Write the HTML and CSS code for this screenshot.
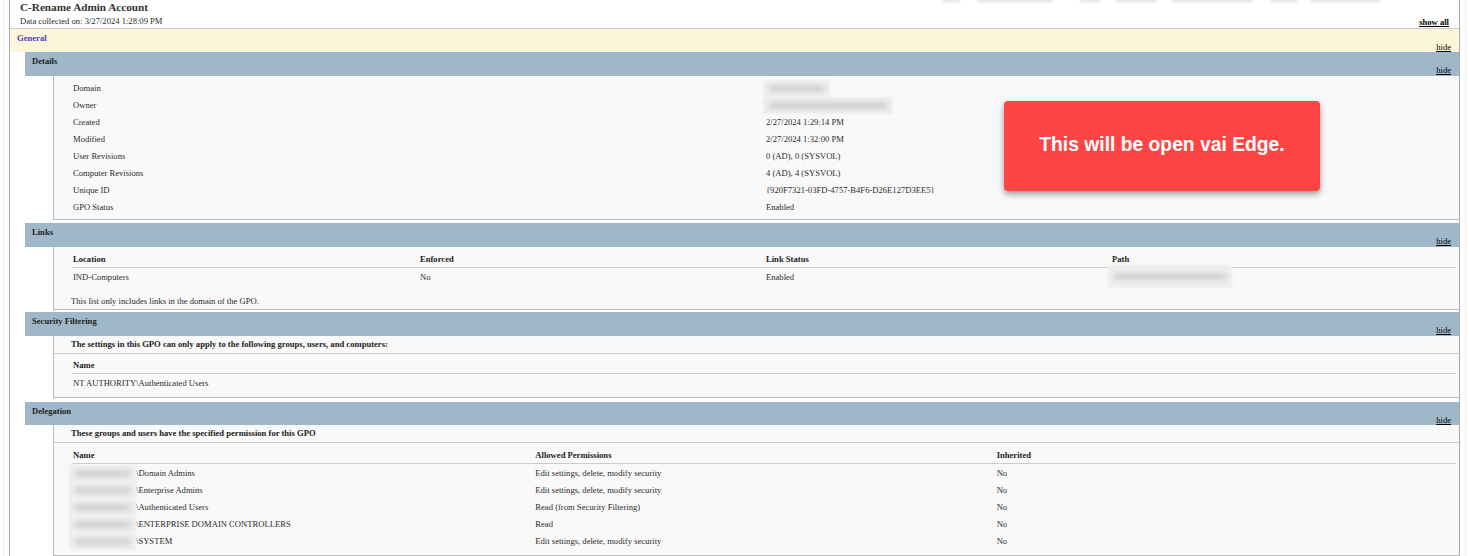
FILE: index.html
```html
<!DOCTYPE html>
<html lang="en">
<head>
    <meta charset="UTF-8">
    <meta name="viewport" content="width=device-width, initial-scale=1.0">
    <title>C-Rename Admin Account</title>
    <link rel="stylesheet" href="styles.css">
</head>
<body>
    <div class="page">
    <div class="report">
        <div class="top-smudge"></div>
        <div class="report-head">
            <div>
                <h1 class="report-title">C-Rename Admin Account</h1>
                <div class="report-date">Data collected on: 3/27/2024 1:28:09 PM</div>
            </div>
            <a class="toggle toggle-bold" href="#">show all</a>
        </div>

        <div class="notice">This will be open vai Edge.</div>

        <div class="general-bar">
            <span class="general-title">General</span>
            <a class="toggle" href="#">hide</a>
        </div>

        <div class="section">
            <div class="section-bar">
                <span class="section-title">Details</span>
                <a class="toggle" href="#">hide</a>
            </div>
            <div class="section-body details-body">
                <table class="info-table">
                    <tr><td>Domain</td><td><span class="smudge smudge-domain"></span></td></tr>
                    <tr><td>Owner</td><td><span class="smudge smudge-owner"></span></td></tr>
                    <tr><td>Created</td><td>2/27/2024 1:29:14 PM</td></tr>
                    <tr><td>Modified</td><td>2/27/2024 1:32:00 PM</td></tr>
                    <tr><td>User Revisions</td><td>0 (AD), 0 (SYSVOL)</td></tr>
                    <tr><td>Computer Revisions</td><td>4 (AD), 4 (SYSVOL)</td></tr>
                    <tr><td>Unique ID</td><td>{920F7321-03FD-4757-B4F6-D26E127D3EE5}</td></tr>
                    <tr><td>GPO Status</td><td>Enabled</td></tr>
                </table>
            </div>
        </div>

        <div class="section section-links">
            <div class="section-bar">
                <span class="section-title">Links</span>
                <a class="toggle" href="#">hide</a>
            </div>
            <div class="section-body links-body">
                <table class="info-table">
                    <thead>
                        <tr><th>Location</th><th>Enforced</th><th>Link Status</th><th>Path</th></tr>
                    </thead>
                    <tr><td>IND-Computers</td><td>No</td><td>Enabled</td><td class="path-cell"><span class="smudge smudge-path"></span></td></tr>
                </table>
                <p class="note">This list only includes links in the domain of the GPO.</p>
            </div>
        </div>

        <div class="section section-filter">
            <div class="section-bar">
                <span class="section-title">Security Filtering</span>
                <a class="toggle" href="#">hide</a>
            </div>
            <div class="section-body filter-body">
                <div class="subhead">The settings in this GPO can only apply to the following groups, users, and computers:</div>
                <table class="info-table">
                    <thead>
                        <tr><th>Name</th></tr>
                    </thead>
                    <tr><td>NT AUTHORITY\Authenticated Users</td></tr>
                </table>
            </div>
        </div>

        <div class="section section-delegation">
            <div class="section-bar">
                <span class="section-title">Delegation</span>
                <a class="toggle" href="#">hide</a>
            </div>
            <div class="section-body delegation-body">
                <div class="subhead">These groups and users have the specified permission for this GPO</div>
                <table class="info-table">
                    <thead>
                        <tr><th>Name</th><th>Allowed Permissions</th><th>Inherited</th></tr>
                    </thead>
                    <tr><td><span class="smudge smudge-name"></span>\Domain Admins</td><td>Edit settings, delete, modify security</td><td>No</td></tr>
                    <tr><td><span class="smudge smudge-name"></span>\Enterprise Admins</td><td>Edit settings, delete, modify security</td><td>No</td></tr>
                    <tr><td><span class="smudge smudge-name"></span>\Authenticated Users</td><td>Read (from Security Filtering)</td><td>No</td></tr>
                    <tr><td><span class="smudge smudge-name"></span>\ENTERPRISE DOMAIN CONTROLLERS</td><td>Read</td><td>No</td></tr>
                    <tr><td><span class="smudge smudge-name"></span>\SYSTEM</td><td>Edit settings, delete, modify security</td><td>No</td></tr>
                </table>
            </div>
        </div>
    </div>
    </div>
</body>
</html>
```

FILE: styles.css
```css
html, body {
    margin: 0;
    padding: 0;
    height: 556px;
    overflow: hidden;
    background-color: #fff;
}

body {
    font-family: "Liberation Serif", "Times New Roman", serif;
    font-size: 8.6px;
    color: #2a2a2a;
}

.page {
    height: 556px;
    margin: 0 3px;
    padding: 0 5px;
    border-left: 1px solid #eee;
    border-right: 1px solid #eee;
}

.report {
    position: relative;
    height: 556px;
    border-right: 1px solid #aaa;
    border-left: 1px solid #aaa;
}

.report-head {
    display: flex;
    justify-content: space-between;
    align-items: flex-end;
    height: 28px;
    padding: 0 10px 0 10px;
    border-bottom: 1px solid #ccc;
}

.report-title {
    margin: 0;
    font-size: 11.2px;
    line-height: 14px;
    font-weight: bold;
    color: #333;
}

.report-date {
    line-height: 14px;
}

.top-smudge {
    position: absolute;
    left: 923px;
    top: -1px;
    width: 450px;
    height: 3px;
    background: linear-gradient(90deg,
        #fff 0 0, #fff 0 10px, #ddd 10px 27px, #fff 27px 44px,
        #ddd 44px 120px, #fff 120px 147px, #ddd 147px 167px,
        #fff 167px 184px, #ddd 184px 224px, #fff 224px 240px,
        #ddd 240px 320px, #fff 320px 337px, #ddd 337px 364px,
        #fff 364px 377px, #ddd 377px 447px, #fff 447px);
    filter: blur(1.5px);
}

.toggle {
    color: #000;
    font-size: 8.6px;
    line-height: 10px;
    text-decoration: underline;
}

.toggle-bold {
    font-weight: bold;
    margin-bottom: 1px;
}

.general-bar {
    display: flex;
    justify-content: space-between;
    align-items: flex-end;
    height: 23px;
    box-sizing: border-box;
    padding: 0 8px 0 7px;
    background-color: #fef6d8;
}

.general-title {
    align-self: flex-start;
    margin-top: 4px;
    font-weight: bold;
    line-height: 10px;
    color: #4a3fc0;
}

.section {
    margin-left: 15px;
    margin-bottom: 3px;
}

.section-links {
    margin-bottom: 2px;
}

.section-filter {
    margin-bottom: 4px;
}

.section-bar {
    display: flex;
    justify-content: space-between;
    align-items: flex-end;
    height: 23px;
    padding: 0 8px 1px 7px;
    background-color: #9fb8c9;
}

.section-delegation .section-bar {
    padding-bottom: 0;
}

.section-title {
    align-self: flex-start;
    margin-top: 4px;
    font-weight: bold;
    line-height: 10px;
    color: #222;
}

.section-body {
    box-sizing: border-box;
    margin-left: 28px;
    background-color: #f9f9f9;
    border-left: 1px solid #bbb;
    border-bottom: 1px solid #bbb;
}

.details-body {
    height: 144px;
    padding-top: 3px;
}

.links-body {
    height: 63px;
    padding-top: 3px;
}

.filter-body {
    height: 62px;
}

.delegation-body {
    height: 131px;
}

.info-table {
    width: 1384px;
    margin-left: 18px;
    border-collapse: collapse;
    table-layout: fixed;
}

.info-table th,
.info-table td {
    padding: 0 0 0 1px;
    height: 17px;
    line-height: 10px;
    text-align: left;
    font-weight: normal;
    white-space: nowrap;
}

.info-table th + th,
.info-table td + td {
    padding-left: 2px;
}

.info-table th {
    font-weight: bold;
    color: #222;
    border-bottom: 1px solid #ccc;
}

.filter-body .info-table th {
    height: 16px;
}

.subhead {
    height: 17px;
    margin-bottom: 3px;
    padding-left: 17px;
    line-height: 17px;
    font-weight: bold;
    color: #222;
    border-bottom: 1px solid #ccc;
}

.note {
    margin: 11px 0 0 17px;
    line-height: 10px;
}

.path-cell {
    position: relative;
}

.smudge {
    display: inline-block;
    vertical-align: top;
    background-color: #eee;
    filter: blur(1px);
}

.smudge::before {
    content: "";
    display: block;
    margin: 5px 6px 0;
    height: 7px;
    background-color: #d2d2d2;
    filter: blur(2px);
}

.smudge-domain {
    width: 67px;
    height: 17px;
    margin: -3px 0 -4px -3px;
}

.smudge-owner {
    width: 130px;
    height: 17px;
    margin: -3px 0 -4px -3px;
}

.smudge-path {
    position: absolute;
    left: -2px;
    top: -3px;
    width: 124px;
    height: 23px;
}

.smudge-path::before {
    margin-top: 8px;
}

.smudge-name {
    width: 67px;
    height: 17px;
    margin: -3px 0 -4px -4px;
}

.notice {
    position: absolute;
    left: 994px;
    top: 101px;
    z-index: 1;
    display: flex;
    align-items: center;
    justify-content: center;
    box-sizing: border-box;
    width: 316px;
    height: 90px;
    padding-bottom: 2px;
    border-radius: 4px;
    background-color: #ff4444;
    box-shadow: 0 3px 6px rgba(0, 0, 0, 0.4);
    font-family: "Liberation Sans", Arial, sans-serif;
    font-size: 19.3px;
    font-weight: bold;
    color: #fff;
}
```
